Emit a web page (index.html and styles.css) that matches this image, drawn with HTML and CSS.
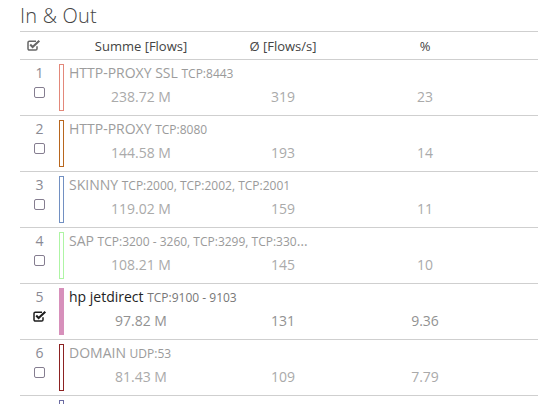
FILE: index.html
```html
<!DOCTYPE html>
<html>
<head>
<meta charset="utf-8">
<link rel="stylesheet" href="styles.css">
</head>
<body>
<div class="panel">
  <h2 class="title">In &amp; Out</h2>
  <div class="table">
    <div class="head">
      <div class="hcheck">
        <svg class="chk" width="14" height="11" viewBox="0 0 14 11"><path d="M9 1.2H2.3A1.3 1.3 0 0 0 1 2.5V8.7A1.3 1.3 0 0 0 2.3 10H8.7A1.3 1.3 0 0 0 10 8.7V6.3" fill="none" stroke="#666" stroke-width="1.5"/><path d="M3.2 4.6L5.6 7L12.3 0.8" fill="none" stroke="#666" stroke-width="2.1"/></svg>
      </div>
      <div class="hcol c1">Summe [Flows]</div>
      <div class="hcol c2">Ø [Flows/s]</div>
      <div class="hcol c3">%</div>
    </div>

    <div class="row">
      <div class="idx"><span class="num">1</span><span class="box"></span></div>
      <div class="bar" style="border-color:#e3887a"></div>
      <div class="name"><span class="svc">HTTP-PROXY SSL</span> <span class="port">TCP:8443</span></div>
      <div class="vals"><span>238.72 M</span><span>319</span><span>23</span></div>
    </div>

    <div class="row">
      <div class="idx"><span class="num">2</span><span class="box"></span></div>
      <div class="bar" style="border-color:#b8661e"></div>
      <div class="name"><span class="svc">HTTP-PROXY</span> <span class="port">TCP:8080</span></div>
      <div class="vals"><span>144.58 M</span><span>193</span><span>14</span></div>
    </div>

    <div class="row">
      <div class="idx"><span class="num">3</span><span class="box"></span></div>
      <div class="bar" style="border-color:#7290c2"></div>
      <div class="name"><span class="svc">SKINNY</span> <span class="port">TCP:2000, TCP:2002, TCP:2001</span></div>
      <div class="vals"><span>119.02 M</span><span>159</span><span>11</span></div>
    </div>

    <div class="row">
      <div class="idx"><span class="num">4</span><span class="box"></span></div>
      <div class="bar" style="border-color:#aef5a4"></div>
      <div class="name"><span class="svc">SAP</span> <span class="port">TCP:3200 - 3260, TCP:3299, TCP:3300 - 3399</span></div>
      <div class="vals"><span>108.21 M</span><span>145</span><span>10</span></div>
    </div>

    <div class="row selected">
      <div class="idx"><span class="num">5</span>
        <svg class="chk rowchk" width="14" height="11" viewBox="0 0 14 11"><path d="M9 1.2H2.3A1.3 1.3 0 0 0 1 2.5V8.7A1.3 1.3 0 0 0 2.3 10H8.7A1.3 1.3 0 0 0 10 8.7V6.3" fill="none" stroke="#1e1e1e" stroke-width="1.5"/><path d="M3.2 4.6L5.6 7L12.3 0.8" fill="none" stroke="#1e1e1e" stroke-width="2.1"/></svg>
      </div>
      <div class="bar filled" style="border-color:#d790bb;background:#d790bb"></div>
      <div class="name"><span class="svc">hp jetdirect</span> <span class="port">TCP:9100 - 9103</span></div>
      <div class="vals"><span>97.82 M</span><span>131</span><span>9.36</span></div>
    </div>

    <div class="row">
      <div class="idx"><span class="num">6</span><span class="box"></span></div>
      <div class="bar" style="border-color:#8c2222"></div>
      <div class="name"><span class="svc">DOMAIN</span> <span class="port">UDP:53</span></div>
      <div class="vals"><span>81.43 M</span><span>109</span><span>7.79</span></div>
    </div>

    <div class="row">
      <div class="idx"><span class="num">7</span><span class="box"></span></div>
      <div class="bar" style="border-color:#6c6ca2"></div>
      <div class="name"><span class="svc">SNMP</span> <span class="port">UDP:161</span></div>
      <div class="vals"><span>72.10 M</span><span>97</span><span>6.93</span></div>
    </div>
  </div>
</div>
</body>
</html>
```

FILE: styles.css
```css
html, body {
  margin: 0;
  padding: 0;
  background: #fff;
  overflow: hidden;
}
body {
  font-family: "Open Sans", "Liberation Sans", sans-serif;
  color: #555;
}
.panel {
  padding: 0 13px 0 20px;
}
.title {
  margin: 4px 0 3px;
  font-size: 20px;
  line-height: 24px;
  font-weight: 300;
  letter-spacing: 0.2px;
  color: #444;
}
.table {
  border-top: 1px solid #cfcfcf;
}
.head {
  display: grid;
  grid-template-columns: 50px 142px 142px 142px 1fr;
  height: 27px;
  align-items: center;
  border-bottom: 1px solid #cfcfcf;
  font-size: 13px;
  color: #444;
}
.hcheck {
  padding-left: 7px;
  display: flex;
  align-items: center;
}
.hcol {
  text-align: center;
}
.row {
  display: grid;
  grid-template-columns: 37px 12px 1fr;
  grid-template-rows: 18px 29px;
  height: 51px;
  padding-top: 4px;
  border-bottom: 1px solid #cfcfcf;
}
.idx {
  grid-column: 1;
  grid-row: 1 / span 2;
  display: flex;
  flex-direction: column;
  align-items: center;
}
.num {
  font-size: 14px;
  line-height: 18px;
  color: #8a8a94;
  padding-left: 2px;
}
.box {
  margin-top: 5px;
  margin-left: 2px;
  width: 9px;
  height: 9px;
  border: 1.3px solid #857d90;
  border-radius: 2px;
}
.rowchk {
  margin-top: 5px;
  margin-left: 3px;
}
.bar {
  grid-column: 2;
  grid-row: 1 / span 2;
  margin-left: 2px;
  width: 3px;
  height: 45px;
  border: 1px solid;
}
.name {
  grid-column: 3;
  grid-row: 1;
  width: 245px;
  white-space: nowrap;
  overflow: hidden;
  text-overflow: ellipsis;
  line-height: 18px;
  font-size: 14px;
  color: #9d9d9d;
}
.port {
  font-size: 12px;
  color: #9a9a9a;
}
.vals {
  grid-column: 3;
  grid-row: 2;
  display: grid;
  grid-template-columns: 142px 142px 142px;
  padding-left: 1px;
  padding-top: 1px;
  line-height: 28px;
  font-size: 14px;
  color: #aaa;
  text-align: center;
}
.selected .name { color: #222; }
.selected .port { color: #777; }
.selected .vals { color: #929292; }
```
